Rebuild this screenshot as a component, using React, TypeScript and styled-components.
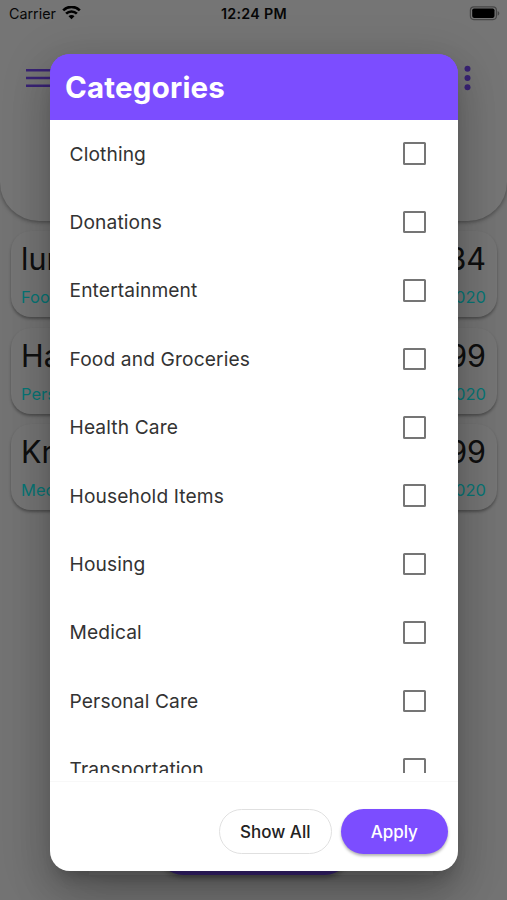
import React from "react";
import styled, { createGlobalStyle } from "styled-components";

const Global = createGlobalStyle`
  * { box-sizing: border-box; }
  body { margin: 0; background: #fff; font-family: Inter, "Liberation Sans", sans-serif; }
`;

const Screen = styled.div`
  position: relative;
  width: 507px;
  height: 900px;
  overflow: hidden;
  background: #fafafa;
`;

const Page = styled.div`
  height: 900px;
  display: flex;
  flex-direction: column;
`;

const Header = styled.header`
  height: 221px;
  flex: none;
  border-radius: 0 0 39px 39px;
  background: #fefefe;
  box-shadow: 0 1px 4px rgba(0, 0, 0, 0.4);
`;

const StatusBar = styled.div`
  height: 28px;
  display: grid;
  grid-template-columns: 1fr auto 1fr;
  align-items: center;
  padding: 0 7px 1px 9px;
  color: #111;
  font-size: 14.3px;
`;

const Carrier = styled.div`
  display: flex;
  align-items: center;
  gap: 6px;
`;

const Clock = styled.div`
  font-weight: 600;
  letter-spacing: 0.3px;
  margin-right: 1px;
`;

const Battery = styled.div`
  display: flex;
  justify-content: flex-end;
`;

const Toolbar = styled.div`
  display: flex;
  justify-content: space-between;
  align-items: center;
  height: 100px;
  padding: 0 36px 0 26px;
`;

const Expenses = styled.div`
  display: flex;
  flex-direction: column;
  gap: 10.5px;
  padding: 10px 10px 0 11px;
`;

const ExpenseCard = styled.div`
  height: 86px;
  padding: 9px 11px 0 10px;
  border-radius: 20px;
  background: #fefefe;
  box-shadow: 0 2px 3px rgba(0, 0, 0, 0.33);
`;

const Line = styled.div<{ $small?: boolean }>`
  display: flex;
  justify-content: space-between;
  font-size: ${(p) => (p.$small ? 16.5 : 30.5)}px;
  line-height: ${(p) => (p.$small ? 38 : 38)}px;
  color: ${(p) => (p.$small ? "#10ffff" : "#222")};
`;

const BottomBar = styled.div`
  margin: auto 74px 25px 89px;
  height: 50px;
  display: flex;
  justify-content: center;
  background: #fff;
  box-shadow: 0 2px 36px rgba(0, 0, 0, 0.14);
`;

const AddButton = styled.div`
  width: 192px;
  height: 50px;
  margin-right: 14px;
  border-radius: 25px;
  background: #7c4dff;
  box-shadow: 0 3px 5px rgba(0, 0, 0, 0.3);
`;

const Backdrop = styled.div`
  position: absolute;
  inset: 0;
  padding: 54px 49px 29px 50px;
  background: rgba(0, 0, 0, 0.54);
`;

const Dialog = styled.section`
  height: 817px;
  display: flex;
  flex-direction: column;
  overflow: hidden;
  border-radius: 20px;
  background: linear-gradient(#7c4dff 0 40px, #fff 40px);
  box-shadow: 0 11px 15px -7px rgba(0, 0, 0, 0.2), 0 24px 38px 3px rgba(0, 0, 0, 0.14),
    0 9px 46px 8px rgba(0, 0, 0, 0.12);
`;

const Title = styled.h1`
  flex: none;
  margin: 0;
  height: 65.5px;
  padding-left: 15px;
  background: #7c4dff;
  color: #fff;
  font-size: 29.5px;
  line-height: 67px;
  font-weight: 700;
  letter-spacing: 0.2px;
`;

const CategoryList = styled.div`
  height: 653.5px;
  flex: none;
  overflow: hidden;
`;

const CategoryRow = styled.label`
  height: 68.4px;
  display: flex;
  align-items: center;
  justify-content: space-between;
  padding: 0 32.5px 0 19.5px;
  color: #333;
  font-size: 19.2px;
  letter-spacing: 0.12px;
`;

const CheckBox = styled.span`
  width: 22.5px;
  height: 22.5px;
  border: 2.4px solid #757575;
  border-radius: 1.5px;
`;

const Footer = styled.footer`
  flex: 1;
  margin-top: 8px;
  border-top: 1px solid #f8f8f8;
  display: flex;
  justify-content: flex-end;
  align-items: flex-start;
  gap: 9px;
  padding: 27px 10px 0 0;
`;

const PillButton = styled.button<{ $primary?: boolean }>`
  width: ${(p) => (p.$primary ? 107.5 : 112.5)}px;
  height: 45px;
  padding: 0;
  border: ${(p) => (p.$primary ? "0" : "1px solid #e0e0e0")};
  border-radius: 23px;
  background: ${(p) => (p.$primary ? "#7c4dff" : "#fff")};
  color: ${(p) => (p.$primary ? "#fff" : "#222")};
  box-shadow: ${(p) => (p.$primary ? "0 2px 3px rgba(0, 0, 0, 0.3)" : "none")};
  font: 500 17px Inter, "Liberation Sans", sans-serif;
`;

const categories = [
  "Clothing", "Donations", "Entertainment", "Food and Groceries", "Health Care",
  "Household Items", "Housing", "Medical", "Personal Care", "Transportation",
];

const expenses = [
  { name: "lunch", amount: "$12.34", category: "Food", date: "6/12/2020" },
  { name: "Hair", amount: "$19.99", category: "Personal", date: "6/10/2020" },
  { name: "Kroger", amount: "$24.99", category: "Medical", date: "6/08/2020" },
];

const WifiIcon = () => (
  <svg width="19" height="15" viewBox="0 0 19 15" fill="none" stroke="#000" strokeWidth="2.6">
    <path d="M1.2 4.3a11.8 11.8 0 0 1 16.6 0" />
    <path d="M4.1 7.7a7.6 7.6 0 0 1 10.8 0" />
    <path d="M9.5 13.3 6.5 10.3a4.2 4.2 0 0 1 6 0Z" fill="#000" stroke="none" />
  </svg>
);

const BatteryIcon = () => (
  <svg width="31" height="15" viewBox="0 0 31 15">
    <rect x="1.4" y="0.8" width="26" height="12.8" rx="3.5" fill="none" stroke="#000" strokeOpacity="0.4" strokeWidth="1.2" />
    <rect x="3.2" y="2.5" width="22.3" height="9.4" rx="1.8" fill="#000" />
    <path d="M28.6 5v4.8c2.3-.9 2.3-3.9 0-4.8Z" fill="#000" fillOpacity="0.4" />
  </svg>
);

const MenuIcon = () => (
  <svg width="30" height="20" viewBox="0 0 30 20" fill="none" stroke="#7c4dff" strokeWidth="2.6">
    <path d="M0 2.2h30M0 10h30M0 17.8h30" />
  </svg>
);

const MoreIcon = () => (
  <svg width="7" height="26" viewBox="0 0 7 26" fill="#7c4dff">
    <circle cx="3.5" cy="3.7" r="3" />
    <circle cx="3.5" cy="13" r="3" />
    <circle cx="3.5" cy="22.3" r="3" />
  </svg>
);

export default function App() {
  return (
    <Screen>
      <Global />
      <Page>
        <Header>
          <StatusBar>
            <Carrier>Carrier <WifiIcon /></Carrier>
            <Clock>12:24 PM</Clock>
            <Battery><BatteryIcon /></Battery>
          </StatusBar>
          <Toolbar><MenuIcon /><MoreIcon /></Toolbar>
        </Header>
        <Expenses>
          {expenses.map((e) => (
            <ExpenseCard key={e.name}>
              <Line><span>{e.name}</span><span>{e.amount}</span></Line>
              <Line $small><span>{e.category}</span><span>{e.date}</span></Line>
            </ExpenseCard>
          ))}
        </Expenses>
        <BottomBar><AddButton /></BottomBar>
      </Page>
      <Backdrop>
        <Dialog>
          <Title>Categories</Title>
          <CategoryList>
            {categories.map((c) => (
              <CategoryRow key={c}>{c}<CheckBox /></CategoryRow>
            ))}
          </CategoryList>
          <Footer>
            <PillButton>Show All</PillButton>
            <PillButton $primary>Apply</PillButton>
          </Footer>
        </Dialog>
      </Backdrop>
    </Screen>
  );
}
